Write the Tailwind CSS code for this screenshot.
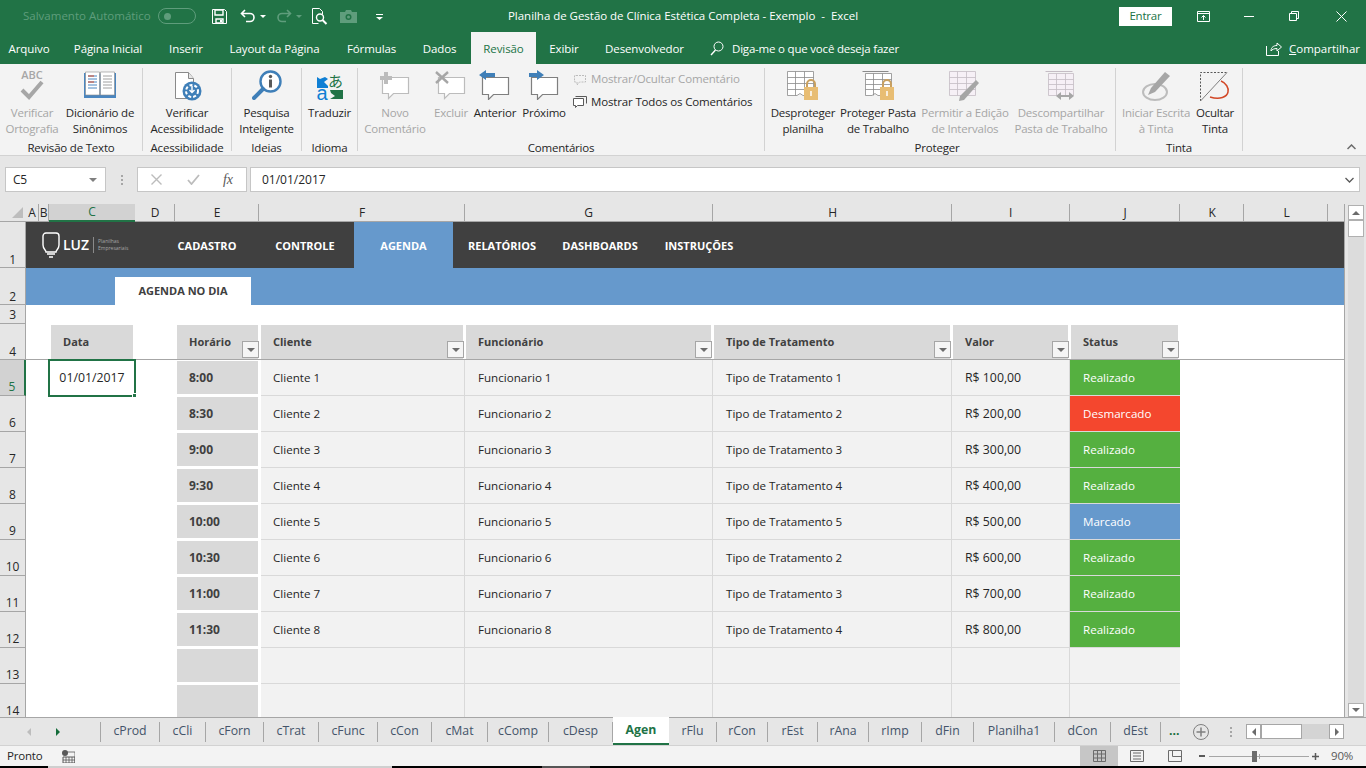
<!DOCTYPE html>
<html lang="pt-BR">
<head>
<meta charset="UTF-8">
<title>Excel</title>
<script src="https://cdn.jsdelivr.net/npm/@tailwindcss/browser@4"></script>
</head>
<body class="w-[1366px] h-[768px] overflow-hidden bg-[#e6e6e6] font-['Open_Sans',sans-serif] text-[11.5px] tracking-[-0.2px] text-[#262626]">
<div class="flex flex-col h-[768px]">

  <!-- barra de titulo -->
  <div class="h-[32px] bg-[#217346] flex items-center text-white shrink-0">
    <div class="w-[483px] flex items-center pl-[23px]">
      <span class="text-[#5f9d7c] w-[135px] tracking-normal whitespace-nowrap">Salvamento Automático</span>
      <div class="w-[38px] h-[16px] rounded-full border border-[#5f9d7c] flex items-center pl-[5px]"><div class="w-[7px] h-[7px] rounded-full bg-[#5f9d7c]"></div></div>
      <svg class="ml-[16px]" width="15" height="15" viewBox="0 0 15 15"><path d="M.5.5h12l2 2v12H.5z" fill="none" stroke="#fff"/><path d="M3 1h8v5H3zM4 10h7v4H4z" fill="none" stroke="#fff" stroke-width="1.4"/><path d="M8 11h2v2H8z" fill="#fff"/></svg>
      <svg class="ml-[13px]" width="16" height="14" viewBox="0 0 16 14"><path d="M5 1 1.5 4.5 5 8M2 4.5h8a4 4 0 0 1 0 8H6" fill="none" stroke="#fff" stroke-width="1.6"/></svg>
      <span class="ml-[4px] w-0 h-0 border-x-[3px] border-x-transparent border-t-[3px] border-t-white"></span>
      <svg class="ml-[10px]" width="16" height="14" viewBox="0 0 16 14"><path d="M11 1l3.500 3.500L11 8M14 4.500H6a4 4 0 0 0 0 8h4" fill="none" stroke="#5f9d7c" stroke-width="1.600"/></svg>
      <span class="ml-[4px] w-0 h-0 border-x-[3px] border-x-transparent border-t-[3px] border-t-[#5f9d7c]"></span>
      <svg class="ml-[10px]" width="16" height="17" viewBox="0 0 16 17"><path d="M.5.5h7l3 3v3M.5.5v15h6" fill="none" stroke="#fff"/><circle cx="8" cy="9.500" r="3.500" fill="none" stroke="#fff" stroke-width="1.400"/><path d="M10.500 12l4 4" stroke="#fff" stroke-width="2"/></svg>
      <svg class="ml-[12px]" width="17" height="13" viewBox="0 0 17 13"><path d="M0 2h5l1-2h5l1 2h5v11H0z" fill="#5f9d7c"/><circle cx="8.500" cy="7" r="3" fill="#217346"/><circle cx="8.500" cy="7" r="1.500" fill="#5f9d7c"/></svg>
      <svg class="ml-[19px]" width="7" height="7" viewBox="0 0 7 7"><path d="M0 1h7v1H0zM0 4h7L3.500 7z" fill="#fff"/></svg>
    </div>
    <div class="w-[400px] text-center tracking-[-0.03px] whitespace-nowrap">Planilha de Gestão de Clínica Estética Completa - Exemplo&nbsp; -&nbsp; Excel</div>
    <div class="flex-1 flex items-center pl-[236px]">
      <div class="w-[53px] h-[19px] bg-white text-[#217346] flex items-center justify-center">Entrar</div>
      <svg class="ml-[25px]" width="13" height="11" viewBox="0 0 13 11"><path d="M.5.500h12v10H.5zM.5 2.500h12M6.500 9V4.500M4.500 6.500l2-2 2 2" fill="none" stroke="#fff"/></svg>
      <div class="ml-[34px] w-[10px] h-px bg-white"></div>
      <svg class="ml-[35px]" width="10" height="10" viewBox="0 0 10 10"><path d="M.5 2.500h7v7h-7zM2.500 2.500v-2h7v7h-2" fill="none" stroke="#fff"/></svg>
      <svg class="ml-[37px]" width="11" height="11" viewBox="0 0 11 11"><path d="M.5.500l10 10M10.500.500l-10 10" stroke="#fff"/></svg>
    </div>
  </div>

  <!-- abas do ribbon -->
  <div class="h-[32px] bg-[#217346] flex text-white shrink-0 tracking-[-0.1px] whitespace-nowrap">
    <div class="w-[58px] text-center pt-[8px]">Arquivo</div>
    <div class="w-[100px] text-center pt-[8px]">Página Inicial</div>
    <div class="w-[56px] text-center pt-[8px]">Inserir</div>
    <div class="w-[121px] text-center pt-[8px]">Layout da Página</div>
    <div class="w-[73px] text-center pt-[8px]">Fórmulas</div>
    <div class="w-[63px] text-center pt-[8px]">Dados</div>
    <div class="w-[65px] text-center pt-[8px] bg-[#f3f3f3] text-[#217346]">Revisão</div>
    <div class="w-[56px] text-center pt-[8px]">Exibir</div>
    <div class="w-[105px] text-center pt-[8px]">Desenvolvedor</div>
    <svg class="ml-[13px] mt-[9px]" width="14" height="15" viewBox="0 0 14 15"><circle cx="8.500" cy="5.500" r="4.500" fill="none" stroke="#fff"/><path d="M5.500 9 1 14" stroke="#fff" stroke-width="1.400"/></svg>
    <div class="ml-[8px] pt-[8px] w-[508px] tracking-[-0.2px]">Diga-me o que você deseja fazer</div>
    <svg class="ml-[26px] mt-[9px]" width="16" height="15" viewBox="0 0 16 15"><path d="M.5 5v9.500h12V10M5 10c0-4 3-5.500 6-5.500V2l4.500 4-4.500 4V7.500c-3 0-5 1-6 2.500z" fill="none" stroke="#fff"/></svg>
    <div class="ml-[7px] pt-[8px] tracking-normal"><span class="underline">C</span>ompartilhar</div>
  </div>

  <!-- ribbon -->
  <div class="h-[92px] bg-[#f3f3f3] border-b border-[#d2d2d2] flex shrink-0 leading-[16px] relative whitespace-nowrap">
    <!-- Revisao de Texto -->
    <div class="w-[143px] flex flex-col pl-[3px] my-[4px] border-r border-[#d2d2d2]">
      <div class="flex h-[72px] shrink-0">
        <div class="w-[58px] flex flex-col items-center text-[#a6a6a6] text-center">
          <div class="h-[37px] flex flex-col items-center pt-[1px]">
            <span class="text-[11px] leading-[11px] font-semibold tracking-normal">ABC</span>
            <svg width="24" height="20" viewBox="0 0 24 20"><path d="M2 10l7 7L22 2" fill="none" stroke="#a6a6a6" stroke-width="4"/></svg>
          </div>
          <div>Verificar<br>Ortografia</div>
        </div>
        <div class="w-[78px] flex flex-col items-center text-center">
          <div class="h-[37px] pt-[3px]">
            <svg width="32" height="27" viewBox="0 0 32 27"><path d="M0 2h15l1 1 1-1h15v25H0z" fill="#4a86c0"/><path d="M1.500 1h14v23h-14zM16.500 1h14v23h-14z" fill="#fff" stroke="#8a8a8a" stroke-width=".6"/><path d="M4 5h9M4 8h9M4 11h9M4 14h9M4 17h9" stroke="#4a86c0"/><path d="M4 5h6" stroke="#d24726"/><path d="M4 11h6" stroke="#d24726"/><path d="M19 5h9M19 8h9M19 11h9M19 14h9M19 17h9" stroke="#a0a0a0"/></svg>
          </div>
          <div>Dicionário de<br>Sinônimos</div>
        </div>
      </div>
      <div class="text-center h-[16px] shrink-0 pr-[3px]">Revisão de Texto</div>
    </div>
    <!-- Acessibilidade -->
    <div class="w-[89px] flex flex-col my-[4px] border-r border-[#d2d2d2]">
      <div class="h-[72px] shrink-0 flex flex-col items-center text-center">
        <div class="h-[37px] pt-[4px]">
          <svg width="30" height="31" viewBox="0 0 30 31"><path d="M3.500.500h13l5 6v20h-18z" fill="#fff" stroke="#8a8a8a"/><path d="M16.500.500v6h5" fill="#e6e6e6" stroke="#8a8a8a"/><circle cx="20" cy="19" r="9.500" fill="#3f7fb8"/><circle cx="20" cy="19" r="6" fill="none" stroke="#fff" stroke-width="2" stroke-dasharray="3 2"/><path d="M20 14v6M17.500 18l2.500 2.500 2.500-2.500" fill="none" stroke="#fff" stroke-width="1.400"/></svg>
        </div>
        <div>Verificar<br>Acessibilidade</div>
      </div>
      <div class="text-center h-[16px] shrink-0">Acessibilidade</div>
    </div>
    <!-- Ideias -->
    <div class="w-[70px] flex flex-col my-[4px] border-r border-[#d2d2d2]">
      <div class="h-[72px] shrink-0 flex flex-col items-center text-center">
        <div class="h-[37px] pt-[2px]">
          <svg width="30" height="30" viewBox="0 0 30 30"><circle cx="18.500" cy="11.500" r="10" fill="#fff" stroke="#3f7fb8" stroke-width="2.400"/><path d="M11 19 2 28" stroke="#3f7fb8" stroke-width="4" stroke-linecap="round"/><path d="M17 9.500h3v8h-3z" fill="#595959"/><circle cx="18.500" cy="6.500" r="1.700" fill="#595959"/></svg>
        </div>
        <div>Pesquisa<br>Inteligente</div>
      </div>
      <div class="text-center h-[16px] shrink-0">Ideias</div>
    </div>
    <!-- Idioma -->
    <div class="w-[56px] flex flex-col my-[4px] border-r border-[#d2d2d2]">
      <div class="h-[72px] shrink-0 flex flex-col items-center text-center">
        <div class="h-[37px] pt-[3px]">
          <svg width="30" height="32" viewBox="0 0 30 32"><path d="M2 6l3 2 5-2 3 2-4 3 4 4v2H2z" fill="#0f7fd4"/><text x="13" y="16" font-size="15" fill="#217346" font-family="Noto Sans CJK JP, sans-serif">あ</text><text x="1.500" y="29" font-size="20" fill="#0f7fd4" font-family="Liberation Sans, sans-serif">a</text><path d="M28 19v9H15l5-3-4-3-1-3z" fill="#217346"/></svg>
        </div>
        <div>Traduzir</div>
      </div>
      <div class="text-center h-[16px] shrink-0">Idioma</div>
    </div>
    <!-- Comentarios -->
    <div class="w-[407px] flex flex-col my-[4px] border-r border-[#d2d2d2]">
      <div class="flex h-[72px] shrink-0">
        <div class="w-[74px] flex flex-col items-center text-center text-[#a6a6a6]">
          <div class="h-[37px] pt-[3px]">
            <svg width="32" height="29" viewBox="0 0 32 29"><path d="M3.500 6.500h26v16h-15l-5 5v-5h-6z" fill="#fff" stroke="#bcbcbc" stroke-width="1.200"/><path d="M5 1h4v4h4v4H9v4H5V9H1V5h4z" fill="#bcbcbc"/></svg>
          </div>
          <div>Novo<br>Comentário</div>
        </div>
        <div class="w-[38px] flex flex-col items-center text-center text-[#a6a6a6]">
          <div class="h-[37px] pt-[3px]">
            <svg width="32" height="29" viewBox="0 0 32 29"><path d="M3.500 6.500h26v16h-15l-5 5v-5h-6z" fill="#fff" stroke="#bcbcbc" stroke-width="1.200"/><path d="M1 1l12 11M13 1 1 12" stroke="#a6a6a6" stroke-width="2.400"/></svg>
          </div>
          <div>Excluir</div>
        </div>
        <div class="w-[50px] flex flex-col items-center text-center">
          <div class="h-[37px] pt-[2px]">
            <svg width="32" height="30" viewBox="0 0 32 30"><path d="M3.500 7.500h26v17h-15l-5 5v-5h-6z" fill="#fff" stroke="#7f7f7f" stroke-width="1.200"/><path d="M0 5l7-5v3h9v4H7v3z" fill="#3f7fb8"/></svg>
          </div>
          <div>Anterior</div>
        </div>
        <div class="w-[48px] flex flex-col items-center text-center">
          <div class="h-[37px] pt-[2px]">
            <svg width="32" height="30" viewBox="0 0 32 30"><path d="M3.500 7.500h26v17h-15l-5 5v-5h-6z" fill="#fff" stroke="#7f7f7f" stroke-width="1.200"/><path d="M16 5 9 0v3H1v4h8v3z" fill="#3f7fb8"/></svg>
          </div>
          <div>Próximo</div>
        </div>
        <div class="ml-[5px] flex flex-col gap-[7px] pt-[3px] tracking-[-0.15px]">
          <div class="flex items-center gap-[4px] text-[#a6a6a6]">
            <svg width="14" height="14" viewBox="0 0 14 14"><path d="M3 3.500h9.500v6.500h-6l-2.500 3v-3H1.500V3.500z" fill="none" stroke="#bcbcbc" stroke-dasharray="2 1"/></svg>
            Mostrar/Ocultar Comentário
          </div>
          <div class="flex items-center gap-[4px]">
            <svg width="14" height="14" viewBox="0 0 14 14"><path d="M.5 3.500h10v7h-6l-2 2v-2h-2z" fill="#fff" stroke="#595959"/><path d="M2.500 1.500h11v7" fill="none" stroke="#595959"/></svg>
            Mostrar Todos os Comentários
          </div>
        </div>
      </div>
      <div class="text-center h-[16px] shrink-0">Comentários</div>
    </div>
    <!-- Proteger -->
    <div class="w-[351px] flex flex-col pl-[1px] my-[4px] border-r border-[#d2d2d2]">
      <div class="flex h-[72px] shrink-0">
        <div class="w-[74px] flex flex-col items-center text-center">
          <div class="h-[37px] pt-[3px]">
            <svg width="32" height="30" viewBox="0 0 32 30"><path d="M.5.500h26v24H16l-3-2-3 2H.5zM.5 6.500h26M.5 12.500h26M.5 18.500h26M8.500.500v24M17.500.500v24" fill="#fff" stroke="#8a8a8a" stroke-width=".8"/><path d="M17 16h14v13H17z" fill="#e8bd73"/><path d="M20 16v-3a4 4 0 0 1 8 0v3" fill="none" stroke="#c9a05e" stroke-width="2"/><path d="M24 20v5" stroke="#fff" stroke-width="1.500"/></svg>
          </div>
          <div>Desproteger<br>planilha</div>
        </div>
        <div class="w-[76px] flex flex-col items-center text-center">
          <div class="h-[37px] pt-[3px]">
            <svg width="32" height="30" viewBox="0 0 32 30"><path d="M.5.500h26" stroke="#8a8a8a" fill="none"/><path d="M3.500 2.500h26v22H16l-3-2-3 2H3.500zM3.500 8.500h26M3.500 13.500h26M3.500 18.500h26M11.500 2.500v22M20.500 2.500v22" fill="#fff" stroke="#8a8a8a" stroke-width=".8"/><path d="M18 16h14v13H18z" fill="#e8bd73"/><path d="M21 16v-3a4 4 0 0 1 8 0v3" fill="none" stroke="#c9a05e" stroke-width="2"/><path d="M25 20v5" stroke="#fff" stroke-width="1.500"/></svg>
          </div>
          <div>Proteger Pasta<br>de Trabalho</div>
        </div>
        <div class="w-[98px] flex flex-col items-center text-center text-[#a6a6a6]">
          <div class="h-[37px] pt-[3px]">
            <svg width="32" height="30" viewBox="0 0 32 30"><path d="M.5.500h26v24H.5zM.5 6.500h26M.5 12.500h26M.5 18.500h26M8.500.500v24M17.500.500v24" fill="#f6f0f6" stroke="#c4bcc4" stroke-width=".8"/><path d="M27 9l3 3-15 17-5 1 1-5z" fill="#a6a6a6"/></svg>
          </div>
          <div>Permitir a Edição<br>de Intervalos</div>
        </div>
        <div class="w-[94px] flex flex-col items-center text-center text-[#a6a6a6]">
          <div class="h-[37px] pt-[3px]">
            <svg width="32" height="30" viewBox="0 0 32 30"><path d="M.5.500h27" fill="none" stroke="#c4bcc4"/><path d="M3.500 2.500h25v22h-25zM3.500 8.500h25M3.500 13.500h25M3.500 18.500h25M11.500 2.500v22M20.500 2.500v22" fill="#f6f0f6" stroke="#c4bcc4" stroke-width=".8"/><path d="M11 25l5-4v3h8v-3l5 4-5 4v-3h-8v3z" fill="#a6a6a6"/></svg>
          </div>
          <div>Descompartilhar<br>Pasta de Trabalho</div>
        </div>
      </div>
      <div class="text-center h-[16px] shrink-0 pr-[7px]">Proteger</div>
    </div>
    <!-- Tinta -->
    <div class="w-[127px] flex flex-col pl-[6px] my-[4px] border-r border-[#d2d2d2]">
      <div class="flex h-[72px] shrink-0">
        <div class="w-[68px] flex flex-col items-center text-center text-[#a6a6a6]">
          <div class="h-[37px] pt-[3px]">
            <svg width="30" height="32" viewBox="0 0 30 32"><ellipse cx="14" cy="21" rx="12" ry="8" fill="none" stroke="#bcbcbc" stroke-width="2"/><path d="M24 1l5 4-15 16-7 3 3-7z" fill="#a6a6a6"/></svg>
          </div>
          <div>Iniciar Escrita<br>à Tinta</div>
        </div>
        <div class="w-[50px] flex flex-col items-center text-center">
          <div class="h-[37px] pt-[3px]">
            <svg width="32" height="32" viewBox="0 0 32 32"><path d="M1.500 30V1.500H28" fill="none" stroke="#595959" stroke-dasharray="2 1.500"/><path d="M28 1.500 1.500 30" stroke="#7f7f7f"/><path d="M22 10c5 2 8 7 7 11-1 5-8 8-18 5" fill="none" stroke="#d24726" stroke-width="1.500"/></svg>
          </div>
          <div>Ocultar<br>Tinta</div>
        </div>
      </div>
      <div class="text-center h-[16px] shrink-0 pr-[6px]">Tinta</div>
    </div>
    <svg class="absolute right-[10px] bottom-[5px]" width="9" height="6" viewBox="0 0 9 6"><path d="M.5 5 4.500 1l4 4" fill="none" stroke="#6b6b6b" stroke-width="1.500"/></svg>
  </div>

  <!-- barra de formulas -->
  <div class="h-[48px] shrink-0 flex items-start pt-[11px] pl-[5px]">
    <div class="w-[101px] h-[25px] bg-white border border-[#c6c6c6] flex items-center justify-between pl-[7px] pr-[8px]">
      <span class="text-[12px]">C5</span>
      <span class="w-0 h-0 border-x-[4px] border-x-transparent border-t-[4px] border-t-[#7f7f7f]"></span>
    </div>
    <div class="w-[31px] h-[25px] flex flex-col items-center justify-center gap-[2px]">
      <i class="w-[2px] h-[2px] bg-[#a6a6a6]"></i><i class="w-[2px] h-[2px] bg-[#a6a6a6]"></i><i class="w-[2px] h-[2px] bg-[#a6a6a6]"></i>
    </div>
    <div class="w-[110px] h-[25px] bg-white border border-[#c6c6c6] flex items-center pl-[13px]">
      <svg width="11" height="11" viewBox="0 0 11 11"><path d="M.5.500l10 10M10.500.500l-10 10" stroke="#bcbcbc" stroke-width="1.400"/></svg>
      <svg class="ml-[25px]" width="13" height="11" viewBox="0 0 13 11"><path d="M1 6l3.500 4L12 1" fill="none" stroke="#bcbcbc" stroke-width="1.800"/></svg>
      <span class="ml-[23px] font-['Liberation_Serif',serif] italic text-[14px] text-[#595959]">fx</span>
    </div>
    <div class="ml-[3px] w-[1110px] h-[25px] bg-white border border-[#c6c6c6] flex items-center justify-between pl-[11px] pr-[5px]">
      <span class="text-[12px] tracking-normal">01/01/2017</span>
      <svg width="9" height="6" viewBox="0 0 9 6"><path d="M.5 1l4 4 4-4" fill="none" stroke="#595959" stroke-width="1.300"/></svg>
    </div>
  </div>

  <!-- planilha + rolagem vertical -->
  <div class="flex h-[513px] shrink-0 overflow-hidden">
    <div class="w-[1345px] h-[513px] overflow-hidden border-r border-[#a6a6a6] grid grid-cols-[26px_13px_10px_86px_40px_84px_206px_248px_239px_118px_110px_64px_84px_16px] grid-rows-[18px_46px_37px_19px_36px_36px_36px_36px_36px_36px_36px_36px_36px_36px_36px]" id="sheet">

      <!-- cabecalho de colunas -->
      <div class="relative border-b border-[#a6a6a6]"><span class="absolute right-[3px] bottom-[3px] w-0 h-0 border-l-[11px] border-l-transparent border-b-[11px] border-b-[#bdbdbd]"></span></div>
      <div class="border-b border-r border-[#a6a6a6] flex items-center justify-center text-[12px]">A</div>
      <div class="border-b border-r border-[#a6a6a6] flex items-center justify-center text-[12px]">B</div>
      <div class="border-b-2 border-[#217346] bg-[#d2d2d2] text-[#217346] flex items-center justify-center text-[12px]">C</div>
      <div class="border-b border-r border-[#a6a6a6] pl-px flex items-center justify-center text-[12px]">D</div>
      <div class="border-b border-r border-[#a6a6a6] pl-px flex items-center justify-center text-[12px]">E</div>
      <div class="border-b border-r border-[#a6a6a6] pl-px flex items-center justify-center text-[12px]">F</div>
      <div class="border-b border-r border-[#a6a6a6] flex items-center justify-center text-[12px]">G</div>
      <div class="border-b border-r border-[#a6a6a6] pl-px flex items-center justify-center text-[12px]">H</div>
      <div class="border-b border-r border-[#a6a6a6] flex items-center justify-center text-[12px]">I</div>
      <div class="border-b border-r border-[#a6a6a6] pl-px flex items-center justify-center text-[12px]">J</div>
      <div class="border-b border-r border-[#a6a6a6] pl-px flex items-center justify-center text-[12px]">K</div>
      <div class="border-b border-r border-[#a6a6a6] pl-[2px] flex items-center justify-center text-[12px]">L</div>
      <div class="border-b border-[#a6a6a6]"></div>

      <!-- linha 1: menu -->
      <div class="border-r border-b border-[#a6a6a6] flex items-end justify-center text-[12px] leading-[14px]">1</div>
      <div class="col-span-13 bg-[#404040] flex text-white font-bold text-[11px] tracking-normal">
        <div class="w-[132px] flex items-center pl-[16px] font-normal">
          <svg width="18" height="26" viewBox="0 0 18 26"><path d="M4 1h10a3 3 0 0 1 3 3v9c0 4-3 5-3 7H4c0-2-3-3-3-7V4a3 3 0 0 1 3-3z" fill="none" stroke="#fff" stroke-width="1.400"/><path d="M5 22h8M7 25h4" stroke="#fff" stroke-width="1.400"/></svg>
          <span class="ml-[3px] text-[14px] font-semibold leading-none">LUZ</span>
          <span class="ml-[4px] w-px h-[16px] bg-[#8a8a8a]"></span>
          <span class="ml-[4px] text-[5px] leading-[7px] text-[#a6a6a6]">Planilhas<br>Empresariais</span>
        </div>
        <div class="w-[98px] pt-[2px] flex items-center justify-center">CADASTRO</div>
        <div class="w-[98px] pt-[2px] flex items-center justify-center">CONTROLE</div>
        <div class="w-[99px] pt-[2px] flex items-center justify-center bg-[#6699cc]">AGENDA</div>
        <div class="w-[98px] pt-[2px] flex items-center justify-center">RELATÓRIOS</div>
        <div class="w-[98px] pt-[2px] flex items-center justify-center">DASHBOARDS</div>
        <div class="w-[100px] pt-[2px] flex items-center justify-center">INSTRUÇÕES</div>
      </div>

      <!-- linha 2: sub menu -->
      <div class="border-r border-b border-[#a6a6a6] flex items-end justify-center text-[12px] leading-[15px]">2</div>
      <div class="col-span-13 bg-[#6699cc] pl-[89px] pt-[9px]">
        <div class="w-[136px] h-[28px] bg-white text-[#404040] font-bold text-[11px] tracking-normal flex items-center justify-center">AGENDA NO DIA</div>
      </div>

      <!-- linha 3 -->
      <div class="border-r border-b border-[#a6a6a6] flex items-end justify-center text-[12px] leading-[17px]">3</div>
      <div class="col-span-13 bg-white"></div>
    </div>

    <div class="w-[21px] pl-[3px] flex flex-col">
      <div class="w-[16px] h-[15px] mt-[1px] bg-white border border-[#b0b0b0] flex items-center justify-center"><span class="w-0 h-0 border-x-[4px] border-x-transparent border-b-[4px] border-b-[#6b6b6b]"></span></div>
      <div class="w-[16px] flex-1 bg-[#dcdcdc]"><div class="h-[17px] bg-white border border-[#b0b0b0]"></div></div>
      <div class="w-[16px] h-[14px] bg-white border border-[#b0b0b0] flex items-center justify-center"><span class="w-0 h-0 border-x-[4px] border-x-transparent border-t-[4px] border-t-[#6b6b6b]"></span></div>
    </div>
  </div>

  <!-- abas de planilha -->
  <div class="h-[28px] shrink-0 border-t border-[#a6a6a6] bg-[#e6e6e6] flex items-center text-[12.300px] tracking-normal text-[#44546a]" id="tabs">
    <div class="w-[101px] h-[20px] border-r border-[#a6a6a6] flex items-center pl-[27px]">
      <span class="w-0 h-0 border-y-[4px] border-y-transparent border-r-[4px] border-r-[#bdbdbd]"></span>
      <span class="ml-[25px] w-0 h-0 border-y-[4px] border-y-transparent border-l-[4px] border-l-[#146c3a]"></span>
    </div>
  </div>

  <!-- barra de status -->
  <div class="h-[21px] shrink-0 bg-[#f3f3f3] border-t border-[#d2d2d2] flex items-center">
    <span class="ml-[7px] w-[55px]">Pronto</span>
    <svg width="13" height="13" viewBox="0 0 13 13"><circle cx="3" cy="3" r="3" fill="#595959"/><path d="M1 7h12v6H1z" fill="none" stroke="#595959"/><path d="M5 2h8v11M1 10h12M4 7v6M7 7v6M10 7v6" fill="none" stroke="#595959" stroke-width=".8"/></svg>
    <div class="ml-[1005px] w-[38px] h-[20px] bg-[#c6c6c6] flex items-center justify-center">
      <svg width="13" height="12" viewBox="0 0 13 12"><path d="M.5.500h12v11H.5zM.5 4h12M.5 8h12M4.500.500v11M8.500.500v11" fill="none" stroke="#6b6b6b"/></svg>
    </div>
    <svg class="ml-[12px]" width="14" height="12" viewBox="0 0 14 12"><path d="M.5.500h13v11H.5z" fill="none" stroke="#6b6b6b"/><path d="M3 3h8M3 6h8M3 9h8" stroke="#6b6b6b"/></svg>
    <svg class="ml-[24px]" width="14" height="12" viewBox="0 0 14 12"><path d="M.5.500h13v11H.5zM4.500.500v6h9" fill="none" stroke="#6b6b6b"/></svg>
    <div class="ml-[17px] w-[6px] h-[2px] bg-[#595959]"></div>
    <div class="ml-[4px] w-[100px] h-px bg-[#a6a6a6] relative">
      <span class="absolute left-[43px] top-[-5px] w-[5px] h-[11px] bg-[#6b6b6b]"></span>
      <span class="absolute left-[50px] top-[-2px] w-px h-[5px] bg-[#a6a6a6]"></span>
    </div>
    <svg class="ml-[3px]" width="7" height="7" viewBox="0 0 7 7"><path d="M0 3.500h7M3.500 0v7" stroke="#595959" stroke-width="1.500"/></svg>
    <span class="ml-[12px] text-[#595959]">90%</span>
  </div>
  <!-- faixa da barra de tarefas -->
  <div class="h-[2px] bg-black shrink-0 flex">
    <div class="ml-[48px] w-[344px] bg-[#cfcfcf]"></div>
    <div class="ml-[150px] w-[48px] bg-[#555555]"></div>
  </div>
</div>

<script>
  // linhas da tabela
  const rows = [
    ["5","8:00","Cliente 1","Funcionario 1","Tipo de Tratamento 1","R$ 100,00","Realizado"],
    ["6","8:30","Cliente 2","Funcionario 2","Tipo de Tratamento 2","R$ 200,00","Desmarcado"],
    ["7","9:00","Cliente 3","Funcionario 3","Tipo de Tratamento 3","R$ 300,00","Realizado"],
    ["8","9:30","Cliente 4","Funcionario 4","Tipo de Tratamento 4","R$ 400,00","Realizado"],
    ["9","10:00","Cliente 5","Funcionario 5","Tipo de Tratamento 5","R$ 500,00","Marcado"],
    ["10","10:30","Cliente 6","Funcionario 6","Tipo de Tratamento 2","R$ 600,00","Realizado"],
    ["11","11:00","Cliente 7","Funcionario 7","Tipo de Tratamento 3","R$ 700,00","Realizado"],
    ["12","11:30","Cliente 8","Funcionario 8","Tipo de Tratamento 4","R$ 800,00","Realizado"],
    ["13","","","","","",""],
    ["14","","","","","",""]
  ]
  const statusColor = { Realizado: "bg-[#55b040]", Desmarcado: "bg-[#f4472e]", Marcado: "bg-[#6699cc]", "": "bg-[#f2f2f2]" }
  const headCell = (name, extra) => `<div class="relative mt-[1px] bg-[#d9d9d9] font-bold text-[11px] tracking-normal text-[#404040] flex items-center pl-[12px] pt-[1px] ${extra}">${name}<span class="absolute -right-[1px] bottom-[1px] w-[17px] h-[17px] bg-[#f5f5f5] border border-[#a6a6a6] flex items-center justify-center"><span class="w-0 h-0 border-x-[4px] border-x-transparent border-t-[4px] border-t-[#6b6b6b]"></span></span></div>`

  let html = `<div class="col-span-full grid grid-cols-subgrid border-b border-[#a6a6a6] bg-white">
    <div class="border-r border-[#a6a6a6] flex items-end justify-center text-[12px] leading-[15px] bg-[#e6e6e6]">4</div>
    <div class="col-span-2"></div>
    <div class="mt-[1px] mx-[2px] bg-[#d9d9d9] font-bold text-[11px] tracking-normal text-[#404040] flex items-center pl-[12px] pt-[1px]">Data</div>
    <div></div>
    ${headCell("Horário", "ml-[2px] mr-[1px]")}
    ${headCell("Cliente", "ml-[2px] mr-[2px]")}
    ${headCell("Funcionário", "ml-[1px] mr-[2px]")}
    ${headCell("Tipo de Tratamento", "ml-[1px] mr-[2px]")}
    ${headCell("Valor", "ml-[1px] mr-[2px]")}
    ${headCell("Status", "ml-[1px] mr-[2px]")}
    <div class="col-span-3"></div>
  </div>`

  for (const r of rows) {
    const sel = r[0] === "5"
    html += `<div class="col-span-full grid grid-cols-subgrid bg-white text-[11.600px] tracking-normal">
      <div class="border-b border-r border-[#a6a6a6] flex items-end justify-center text-[12px] leading-[17px] ${sel ? "bg-[#d2d2d2] text-[#217346] border-r-[#217346] border-r-2" : "bg-[#e6e6e6]"}">${r[0]}</div>
      <div class="col-span-2"></div>
      ${sel ? `<div class="relative -m-[1px] border-2 border-[#217346] flex items-center justify-center text-[12.300px] pt-[1px]">01/01/2017<span class="absolute -right-[3px] -bottom-[3px] w-[5px] h-[5px] bg-[#217346] border border-white"></span></div>` : `<div></div>`}
      <div></div>
      <div class="mt-[1px] mb-[2px] ml-[2px] mr-[1px] bg-[#d9d9d9] font-bold text-[#404040] text-[12px] flex items-center pl-[12px] pt-[1px]">${r[1]}</div>
      <div class="ml-[2px] bg-[#f2f2f2] border-b border-r border-[#d9d9d9] flex items-center pl-[12px] pt-[1px]">${r[2]}</div>
      <div class="bg-[#f2f2f2] border-b border-r border-[#d9d9d9] flex items-center pl-[13px] pt-[1px]">${r[3]}</div>
      <div class="bg-[#f2f2f2] border-b border-r border-[#d9d9d9] flex items-center pl-[13px] pt-[1px]">${r[4]}</div>
      <div class="bg-[#f2f2f2] border-b border-r border-[#d9d9d9] flex items-center pl-[13px] pt-[1px] text-[12.300px]">${r[5]}</div>
      <div class="${statusColor[r[6]]} border-b border-[#d9d9d9] text-white flex items-center pl-[13px] pt-[1px]">${r[6]}</div>
      <div class="col-span-3"></div>
    </div>`
  }
  document.getElementById("sheet").insertAdjacentHTML("beforeend", html)

  // abas de planilha: [nome, largura]
  const tabs = [["cProd",59],["cCli",46],["cForn",58],["cTrat",55],["cFunc",59],["cCon",54],["cMat",56],["cComp",61],["cDesp",64],["Agen",56],["rFlu",48],["rCon",51],["rEst",50],["rAna",51],["rImp",53],["dFin",52],["Planilha1",81],["dCon",56],["dEst",50]]
  const tabBar = document.getElementById("tabs")
  let tabHtml = ""
  for (const [name, w] of tabs) {
    tabHtml += name === "Agen"
      ? `<div style="width:${w}px" class="h-[28px] -mt-px bg-white text-[#217346] font-bold border-b-2 border-[#217346] flex items-center justify-center">${name}</div>`
      : `<div style="width:${w}px" class="h-[20px] border-r border-[#a6a6a6] flex items-center justify-center">${name}</div>`
  }
  tabHtml += `<span class="ml-[8px] w-[24px] font-bold text-[#146c3a]">...</span>
    <svg width="16" height="16" viewBox="0 0 16 16"><circle cx="8" cy="8" r="7.500" fill="none" stroke="#7f7f7f"/><path d="M8 3.500v9M3.500 8h9" stroke="#7f7f7f" stroke-width="1.500"/></svg>
    <div class="ml-[21px] flex flex-col gap-[2px]"><i class="w-[2px] h-[2px] bg-[#a6a6a6]"></i><i class="w-[2px] h-[2px] bg-[#a6a6a6]"></i><i class="w-[2px] h-[2px] bg-[#a6a6a6]"></i></div>
    <div class="ml-[14px] w-[98px] h-[15px] flex bg-[#d4d4d4]">
      <div class="w-[15px] bg-white border border-[#a6a6a6] flex items-center justify-center"><span class="w-0 h-0 border-y-[4px] border-y-transparent border-r-[4px] border-r-[#6b6b6b]"></span></div>
      <div class="w-[41px] bg-white border border-[#a6a6a6]"></div>
      <div class="flex-1"></div>
      <div class="w-[15px] bg-white border border-[#a6a6a6] flex items-center justify-center"><span class="w-0 h-0 border-y-[4px] border-y-transparent border-l-[4px] border-l-[#6b6b6b]"></span></div>
    </div>`
  tabBar.insertAdjacentHTML("beforeend", tabHtml)
</script>
</body>
</html>
